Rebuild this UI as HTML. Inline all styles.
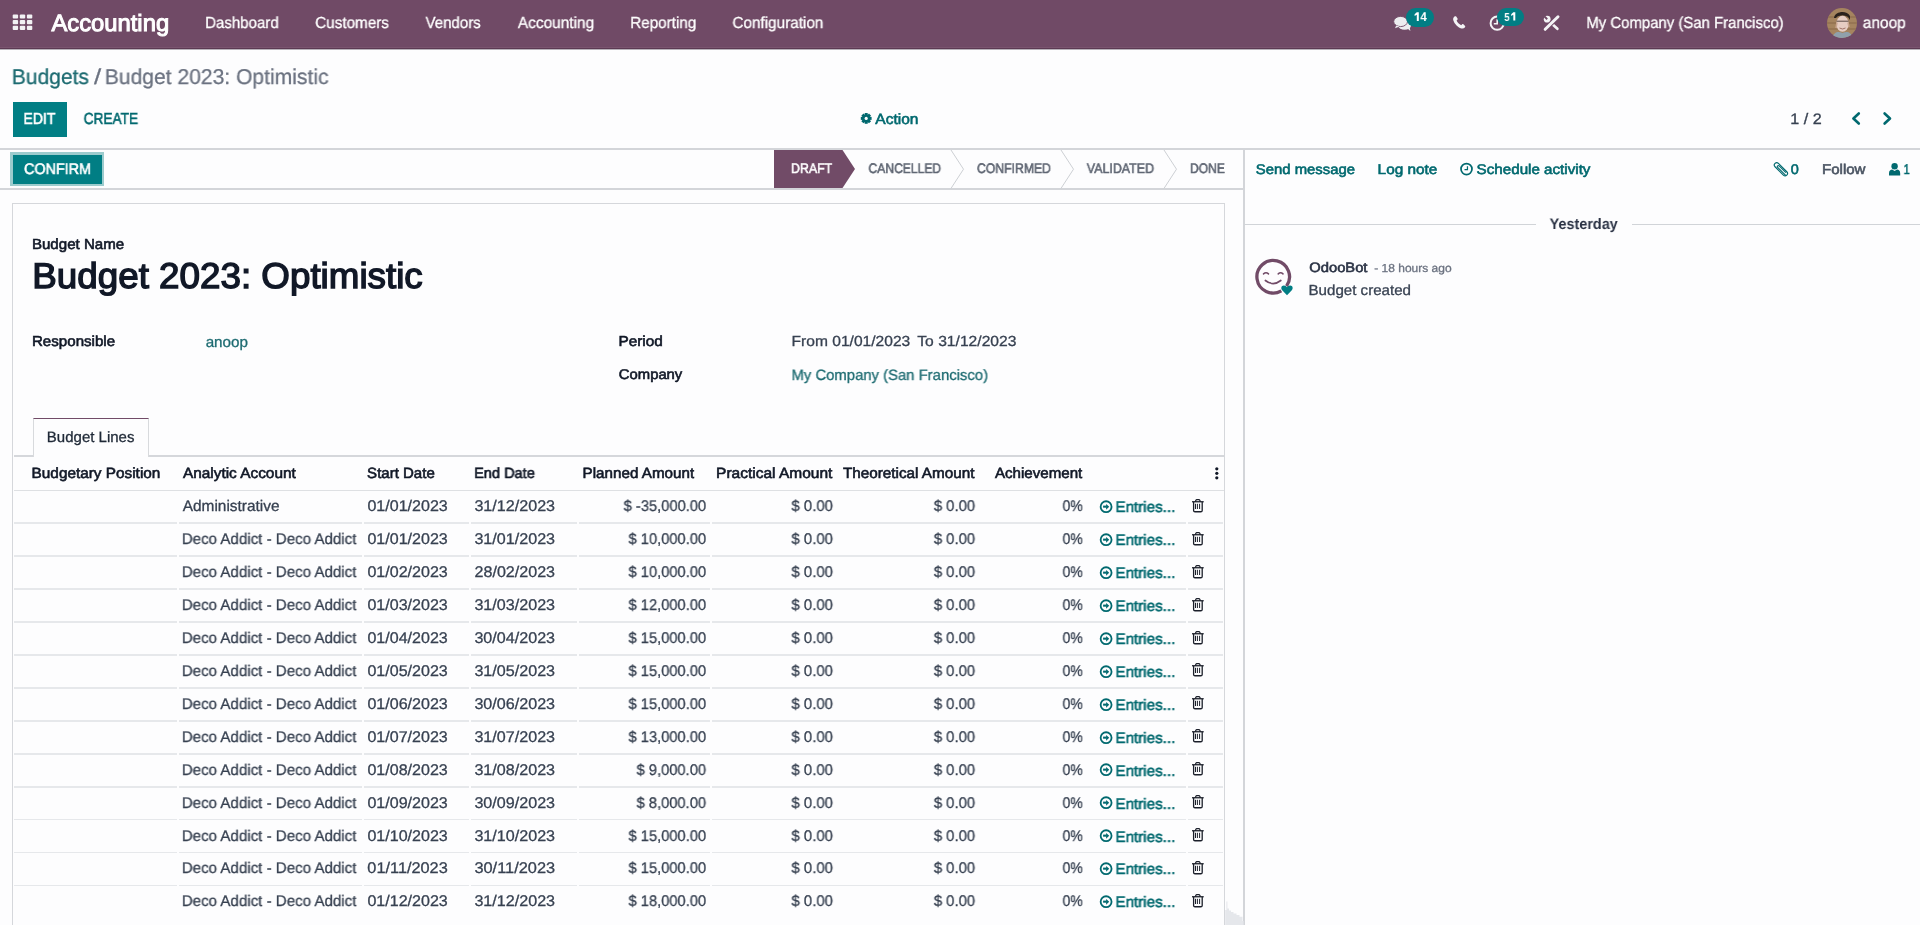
<!DOCTYPE html>
<html><head><meta charset="utf-8"><title>Budget 2023: Optimistic</title>
<style>
html,body{margin:0;padding:0;}
body{width:1920px;height:925px;overflow:hidden;position:relative;background:#FDFDFE;font-family:"Liberation Sans",sans-serif;}
.t{position:absolute;white-space:nowrap;line-height:1;transform-origin:0 0;text-rendering:geometricPrecision;will-change:transform;}
</style></head><body>
<div style="position:absolute;left:0px;top:0px;width:1920px;height:49px;background:#704A66;"></div>
<div style="position:absolute;left:0px;top:46.8px;width:1920px;height:1.1px;background:#7A546F;"></div>
<div style="position:absolute;left:0px;top:47.9px;width:1920px;height:1.1px;background:#5C3A53;"></div>
<div style="position:absolute;left:0px;top:49px;width:1920px;height:0.6px;background:#B8B2BA;"></div>
<svg style="position:absolute;left:0px;top:0px;overflow:visible" width="40" height="40" viewBox="0 0 40 40"><rect x="12.70" y="14.40" width="5.4" height="4.2" rx="1" fill="#F2F2F4"/><rect x="19.80" y="14.40" width="5.4" height="4.2" rx="1" fill="#F2F2F4"/><rect x="26.90" y="14.40" width="5.4" height="4.2" rx="1" fill="#F2F2F4"/><rect x="12.70" y="20.10" width="5.4" height="4.2" rx="1" fill="#F2F2F4"/><rect x="19.80" y="20.10" width="5.4" height="4.2" rx="1" fill="#F2F2F4"/><rect x="26.90" y="20.10" width="5.4" height="4.2" rx="1" fill="#F2F2F4"/><rect x="12.70" y="25.80" width="5.4" height="4.2" rx="1" fill="#F2F2F4"/><rect x="19.80" y="25.80" width="5.4" height="4.2" rx="1" fill="#F2F2F4"/><rect x="26.90" y="25.80" width="5.4" height="4.2" rx="1" fill="#F2F2F4"/></svg>
<div class="t" style="left:51px;top:13px;font-size:23.6px;color:#FFFFFF;transform:translateX(0.408px) scaleX(1.0084);-webkit-text-stroke:1.0px currentColor;">Accounting</div>
<div class="t" style="left:205px;top:16px;font-size:16.0px;color:#FFFFFF;transform:translateX(0.143px) scaleX(0.9390);-webkit-text-stroke:0.3px currentColor;">Dashboard</div>
<div class="t" style="left:315px;top:16px;font-size:16.0px;color:#FFFFFF;transform:translateX(0.184px) scaleX(0.9535);-webkit-text-stroke:0.3px currentColor;">Customers</div>
<div class="t" style="left:425px;top:16px;font-size:16.0px;color:#FFFFFF;transform:translateX(0.562px) scaleX(0.9389);-webkit-text-stroke:0.3px currentColor;">Vendors</div>
<div class="t" style="left:517px;top:16px;font-size:16.0px;color:#FFFFFF;transform:translateX(0.812px) scaleX(0.9651);-webkit-text-stroke:0.3px currentColor;">Accounting</div>
<div class="t" style="left:630px;top:16px;font-size:16.0px;color:#FFFFFF;transform:translateX(0.223px) scaleX(0.9523);-webkit-text-stroke:0.3px currentColor;">Reporting</div>
<div class="t" style="left:732px;top:16px;font-size:16.0px;color:#FFFFFF;transform:translateX(0.428px) scaleX(0.9551);-webkit-text-stroke:0.3px currentColor;">Configuration</div>
<svg style="position:absolute;left:1390px;top:12px;overflow:visible" width="24" height="22" viewBox="0 0 24 22"><ellipse cx="14.6" cy="13.4" rx="6.4" ry="4.4" fill="#ECECEF"/><path d="M17.4 16.6 L20.4 18.9 L19.6 14.8 Z" fill="#ECECEF"/><ellipse cx="10.6" cy="9.5" rx="6.9" ry="5.1" fill="#ECECEF" stroke="#714B67" stroke-width="0.9"/><path d="M6.2 13.4 L5 16.3 L9.6 14.4 Z" fill="#ECECEF"/></svg>
<div style="position:absolute;left:1406.2px;top:7.5px;width:28.2px;height:19.5px;background:#017E84;border-radius:10px;"></div>
<div class="t" style="left:1420px;top:11px;font-size:12.6px;color:#FFFFFF;transform:translateX(0.386px) scaleX(0.9071);font-weight:bold;">4</div>
<svg style="position:absolute;left:0px;top:0px;overflow:visible" width="1" height="1" viewBox="0 0 1 1"><path d="M1416.8 12.3 H1418.8 V21 H1416.8 V14.700000000000001 L1414.6 15.9 V14.200000000000001 Z" fill="#FFFFFF"/></svg>
<svg style="position:absolute;left:1453px;top:16px;overflow:visible" width="13" height="13" viewBox="0 0 13 13"><path d="M3.2 0.4 C2.6 0.2 1.8 0.3 1.2 0.8 C0.3 1.6 -0.1 2.8 0.3 4.2 C1.4 7.8 4.6 11.2 8.4 12.4 C9.8 12.8 11 12.4 11.8 11.6 C12.3 11.1 12.4 10.4 12.1 9.9 L10.6 8.4 C10.1 8 9.4 8 9 8.4 L8.2 9.2 C6.2 8.4 4.4 6.6 3.6 4.6 L4.4 3.8 C4.8 3.4 4.8 2.7 4.4 2.2 Z" fill="#F4F4F6"/></svg>
<svg style="position:absolute;left:1489px;top:15px;overflow:visible" width="17" height="17" viewBox="0 0 17 17"><circle cx="8.2" cy="8.2" r="6.6" fill="none" stroke="#F4F4F6" stroke-width="2"/><path d="M8.2 4.2 V8.8 H4.8" fill="none" stroke="#F4F4F6" stroke-width="1.6"/></svg>
<div style="position:absolute;left:1497.2px;top:7.7px;width:27px;height:18.3px;background:#017E84;border-radius:9.2px;"></div>
<div class="t" style="left:1504px;top:12px;font-size:11.6px;color:#FFFFFF;transform:translateX(0.340px) scaleX(0.8219);font-weight:bold;">5</div>
<svg style="position:absolute;left:0px;top:0px;overflow:visible" width="1" height="1" viewBox="0 0 1 1"><path d="M1513.3 12.3 H1515.3 V20.4 H1513.3 V14.700000000000001 L1511.2 15.9 V14.200000000000001 Z" fill="#FFFFFF"/></svg>
<svg style="position:absolute;left:1536px;top:8px;overflow:visible" width="30" height="30" viewBox="0 0 30 30"><path d="M15 15 L21.4 20.8" stroke="#F4F4F6" stroke-width="2.6" stroke-linecap="round"/><circle cx="11.2" cy="11.2" r="3.4" fill="#F4F4F6"/><path d="M11.9 10.5 L8.2 6.8 L6.8 8.2 L10.5 11.9 Z" fill="#714B67"/><path d="M9.2 21.3 L22 8.8" stroke="#714B67" stroke-width="4.8" stroke-linecap="round"/><path d="M9.2 21.3 L22 8.8" stroke="#F4F4F6" stroke-width="3" stroke-linecap="round"/></svg>
<div class="t" style="left:1586px;top:16px;font-size:16.0px;color:#FFFFFF;transform:translateX(0.373px) scaleX(0.9321);-webkit-text-stroke:0.3px currentColor;">My Company (San Francisco)</div>
<svg style="position:absolute;left:1827px;top:8px;overflow:visible" width="30" height="30" viewBox="0 0 30 30"><defs><clipPath id="av"><circle cx="15" cy="15" r="15"/></clipPath></defs><g clip-path="url(#av)"><rect width="30" height="30" fill="#a5845f"/><rect x="0" y="8" width="30" height="2" fill="#8d6d4c" opacity="0.6"/><rect x="0" y="14" width="30" height="2" fill="#8d6d4c" opacity="0.6"/><rect x="0" y="20" width="30" height="2" fill="#8d6d4c" opacity="0.6"/><path d="M7 10 C8 3 20 2 23 8 L23 12 L21 9 C17 7 11 7 9 10 Z" fill="#2a211c"/><ellipse cx="15.5" cy="15.8" rx="6.2" ry="8" fill="#e6cdc3"/><path d="M9.5 13.2 H21.5" stroke="#5a4a48" stroke-width="1"/><path d="M10 14.5 L9 20 M21 14.5 L22 19" stroke="#c9a58f" stroke-width="1.5"/><path d="M12.5 20 Q15.5 22 18.5 20" stroke="#9a6a60" stroke-width="0.9" fill="none"/><path d="M5 30 C7 24 11 23 15.5 25 C20 23 24 24 26 30 Z" fill="#8fa0ab"/></g></svg>
<div class="t" style="left:1862px;top:16px;font-size:16.0px;color:#FFFFFF;transform:translateX(0.746px) scaleX(0.9666);-webkit-text-stroke:0.3px currentColor;">anoop</div>
<div class="t" style="left:11px;top:67px;font-size:21.4px;color:#1D6B71;transform:translateX(0.794px) scaleX(0.9831);-webkit-text-stroke:0.3px currentColor;">Budgets</div>
<div class="t" style="left:93px;top:67px;font-size:21.4px;color:#6B7280;transform:translateX(0.877px) scaleX(1.2073);-webkit-text-stroke:0.3px currentColor;">/</div>
<div class="t" style="left:104px;top:67px;font-size:21.4px;color:#6B7280;transform:translateX(0.782px) scaleX(0.9850);-webkit-text-stroke:0.3px currentColor;">Budget 2023: Optimistic</div>
<div style="position:absolute;left:12.75px;top:101.9px;width:54.2px;height:34.9px;background:#017E84;"></div>
<div class="t" style="left:23px;top:112px;font-size:16.0px;color:#FFFFFF;transform:translateX(0.419px) scaleX(0.8759);-webkit-text-stroke:0.6px currentColor;">EDIT</div>
<div class="t" style="left:83px;top:112px;font-size:16.0px;color:#01696F;transform:translateX(0.670px) scaleX(0.8547);-webkit-text-stroke:0.6px currentColor;">CREATE</div>
<svg style="position:absolute;left:860.6px;top:113.2px;overflow:visible" width="11" height="11" viewBox="0 0 11 11"><g transform="translate(5.2,5.4)"><rect x="-1.5" y="-5.4" width="3" height="3" fill="#01696F" transform="rotate(0)"/><rect x="-1.5" y="-5.4" width="3" height="3" fill="#01696F" transform="rotate(45)"/><rect x="-1.5" y="-5.4" width="3" height="3" fill="#01696F" transform="rotate(90)"/><rect x="-1.5" y="-5.4" width="3" height="3" fill="#01696F" transform="rotate(135)"/><rect x="-1.5" y="-5.4" width="3" height="3" fill="#01696F" transform="rotate(180)"/><rect x="-1.5" y="-5.4" width="3" height="3" fill="#01696F" transform="rotate(225)"/><rect x="-1.5" y="-5.4" width="3" height="3" fill="#01696F" transform="rotate(270)"/><rect x="-1.5" y="-5.4" width="3" height="3" fill="#01696F" transform="rotate(315)"/><circle r="4" fill="#01696F"/><circle r="1.6" fill="#FDFDFE"/></g></svg>
<div class="t" style="left:875px;top:113px;font-size:14.8px;color:#01696F;transform:translateX(0.329px) scaleX(1.0464);-webkit-text-stroke:0.6px currentColor;">Action</div>
<div class="t" style="left:1790px;top:112px;font-size:15.2px;color:#374151;transform:translateX(0.279px) scaleX(1.0648);-webkit-text-stroke:0.3px currentColor;">1 / 2</div>
<svg style="position:absolute;left:1851px;top:112px;overflow:visible" width="10" height="13" viewBox="0 0 10 13"><path d="M7.8 1.5 L2.4 6.5 L7.8 11.5" fill="none" stroke="#01696F" stroke-width="2.6" stroke-linecap="round" stroke-linejoin="round"/></svg>
<svg style="position:absolute;left:1883px;top:112px;overflow:visible" width="10" height="13" viewBox="0 0 10 13"><path d="M1.6 1.5 L7 6.5 L1.6 11.5" fill="none" stroke="#01696F" stroke-width="2.6" stroke-linecap="round" stroke-linejoin="round"/></svg>
<div style="position:absolute;left:0px;top:148.2px;width:1920px;height:1.9px;background:#D3D5D9;"></div>
<div style="position:absolute;left:10.3px;top:152px;width:93.8px;height:34px;background:#9ccbcd;"></div>
<div style="position:absolute;left:12.75px;top:154.5px;width:89.65px;height:29.4px;background:#017E84;"></div>
<div class="t" style="left:24px;top:162px;font-size:15.2px;color:#FFFFFF;transform:translateX(0.055px) scaleX(0.9442);-webkit-text-stroke:0.6px currentColor;">CONFIRM</div>
<div style="position:absolute;left:0px;top:188.1px;width:1243px;height:1.9px;background:#D3D5D9;"></div>
<svg style="position:absolute;left:774px;top:150.3px;overflow:visible" width="82" height="38" viewBox="0 0 82 38"><path d="M0 0 H68.5 L81 19 L68.5 38 H0 Z" fill="#714B67"/></svg>
<div class="t" style="left:790px;top:162px;font-size:13.8px;color:#FFFFFF;transform:translateX(0.991px) scaleX(0.8960);-webkit-text-stroke:0.6px currentColor;">DRAFT</div>
<div class="t" style="left:868px;top:162px;font-size:13.8px;color:#5F6673;transform:translateX(0.452px) scaleX(0.8770);-webkit-text-stroke:0.6px currentColor;">CANCELLED</div>
<div class="t" style="left:976px;top:162px;font-size:13.8px;color:#5F6673;transform:translateX(0.920px) scaleX(0.8855);-webkit-text-stroke:0.6px currentColor;">CONFIRMED</div>
<div class="t" style="left:1086px;top:162px;font-size:13.8px;color:#5F6673;transform:translateX(0.775px) scaleX(0.9013);-webkit-text-stroke:0.6px currentColor;">VALIDATED</div>
<div class="t" style="left:1189px;top:162px;font-size:13.8px;color:#5F6673;transform:translateX(0.994px) scaleX(0.8735);-webkit-text-stroke:0.6px currentColor;">DONE</div>
<svg style="position:absolute;left:951.25px;top:150px;overflow:visible" width="14" height="39" viewBox="0 0 14 39"><path d="M0 0 L12.5 19.2 L0 38.4" fill="none" stroke="#CDD0D4" stroke-width="1"/></svg>
<svg style="position:absolute;left:1061.25px;top:150px;overflow:visible" width="14" height="39" viewBox="0 0 14 39"><path d="M0 0 L12.5 19.2 L0 38.4" fill="none" stroke="#CDD0D4" stroke-width="1"/></svg>
<svg style="position:absolute;left:1164.4px;top:150px;overflow:visible" width="14" height="39" viewBox="0 0 14 39"><path d="M0 0 L12.5 19.2 L0 38.4" fill="none" stroke="#CDD0D4" stroke-width="1"/></svg>
<div style="position:absolute;left:1242.8px;top:150px;width:1.9px;height:775px;background:#D3D5D9;"></div>
<div class="t" style="left:1255px;top:162px;font-size:14.0px;color:#01696F;transform:translateX(0.798px) scaleX(1.0625);-webkit-text-stroke:0.6px currentColor;">Send message</div>
<div class="t" style="left:1377px;top:162px;font-size:14.0px;color:#01696F;transform:translateX(0.580px) scaleX(1.0979);-webkit-text-stroke:0.6px currentColor;">Log note</div>
<svg style="position:absolute;left:1455px;top:158px;overflow:visible" width="25" height="24" viewBox="0 0 25 24"><circle cx="11.5" cy="11.1" r="5.5" fill="none" stroke="#01696F" stroke-width="1.7"/><path d="M12.45 8.2 V11.5 H9.5" fill="none" stroke="#01696F" stroke-width="1.25"/></svg>
<div class="t" style="left:1476px;top:162px;font-size:14.0px;color:#01696F;transform:translateX(0.616px) scaleX(1.0836);-webkit-text-stroke:0.6px currentColor;">Schedule activity</div>
<svg style="position:absolute;left:1770px;top:158px;overflow:visible" width="30" height="24" viewBox="0 0 30 24"><g transform="translate(10.9 11.25) rotate(-45)"><rect x="-2.4" y="-8.3" width="4.8" height="16.6" rx="2.4" fill="none" stroke="#01696F" stroke-width="1.15"/><path d="M-1 8.1 V-3.6 A1.05 1.05 0 0 1 1.1 -3.6 V6" fill="none" stroke="#01696F" stroke-width="1.1"/></g></svg>
<div class="t" style="left:1790px;top:162px;font-size:14.0px;color:#01696F;transform:translateX(0.676px) scaleX(1.0333);-webkit-text-stroke:0.6px currentColor;">0</div>
<div class="t" style="left:1821px;top:162px;font-size:14.0px;color:#4B5563;transform:translateX(0.965px) scaleX(1.0754);-webkit-text-stroke:0.6px currentColor;">Follow</div>
<svg style="position:absolute;left:1889px;top:162.8px;overflow:visible" width="11.5" height="13" viewBox="0 0 11.5 13"><circle cx="5.6" cy="3.3" r="3.2" fill="#01696F"/><path d="M0 12.6 V10.2 C0 8 1.6 6.6 3.2 6.6 L5.6 8 L8 6.6 C9.8 6.6 11.2 8 11.2 10.2 V12.6 Z" fill="#01696F"/></svg>
<div class="t" style="left:1903px;top:162px;font-size:14.0px;color:#01696F;transform:translateX(0.568px) scaleX(0.8033);-webkit-text-stroke:0.6px currentColor;">1</div>
<div style="position:absolute;left:1244px;top:224px;width:291.7px;height:1.2px;background:#D1D4D8;"></div>
<div style="position:absolute;left:1631.6px;top:224px;width:288.4px;height:1.2px;background:#D1D4D8;"></div>
<div class="t" style="left:1549px;top:217px;font-size:15.2px;color:#2B3345;transform:translateX(0.598px) scaleX(0.9497);font-weight:bold;">Yesterday</div>
<svg style="position:absolute;left:1250px;top:253px;overflow:visible" width="50" height="47" viewBox="0 0 50 47"><path d="M36.55 33.15 A16.3 16.3 0 1 0 31.35 37.9" fill="none" stroke="#714B67" stroke-width="3.3"/><path d="M13.5 20.9 Q16 18.5 18.5 20.9" fill="none" stroke="#714B67" stroke-width="1.5" stroke-linecap="round"/><path d="M28.2 20.9 Q30.6 18.5 33 20.9" fill="none" stroke="#714B67" stroke-width="1.5" stroke-linecap="round"/><path d="M15.4 27.5 Q23.1 33.6 30.8 27.5" fill="none" stroke="#714B67" stroke-width="1.7" stroke-linecap="round"/><path d="M37 42.2 L32.2 37.2 C30.6 35.6 31.2 32.6 33.8 32.5 C35.2 32.4 36.2 33.2 37 34.2 C37.8 33.2 38.8 32.4 40.2 32.5 C42.8 32.6 43.4 35.6 41.8 37.2 Z" fill="#017E84"/></svg>
<div class="t" style="left:1309px;top:261px;font-size:13.6px;color:#2B3345;transform:translateX(0.290px) scaleX(1.0835);-webkit-text-stroke:0.6px currentColor;">OdooBot</div>
<div class="t" style="left:1374px;top:263px;font-size:11.6px;color:#6B7280;transform:translateX(0.216px) scaleX(1.0348);-webkit-text-stroke:0.3px currentColor;">- 18 hours ago</div>
<div class="t" style="left:1308px;top:284px;font-size:14.6px;color:#374151;transform:translateX(0.544px) scaleX(1.0349);-webkit-text-stroke:0.3px currentColor;">Budget created</div>
<div style="position:absolute;left:12.3px;top:203.1px;width:1213px;height:800px;border:1.8px solid #D5D7DB;box-sizing:border-box;background:#FDFDFE;"></div>
<div class="t" style="left:31px;top:238px;font-size:14.6px;color:#111827;transform:translateX(0.924px) scaleX(1.0336);-webkit-text-stroke:0.6px currentColor;">Budget Name</div>
<div class="t" style="left:32px;top:259px;font-size:35.8px;color:#111827;transform:translateX(0.341px) scaleX(1.0272);-webkit-text-stroke:1.4px currentColor;">Budget 2023: Optimistic</div>
<div class="t" style="left:31px;top:335px;font-size:14.4px;color:#111827;transform:translateX(0.949px) scaleX(1.0500);-webkit-text-stroke:0.6px currentColor;">Responsible</div>
<div class="t" style="left:205px;top:335px;font-size:15.0px;color:#1D6B71;transform:translateX(0.653px) scaleX(1.0147);-webkit-text-stroke:0.3px currentColor;">anoop</div>
<div class="t" style="left:618px;top:335px;font-size:14.4px;color:#111827;transform:translateX(0.423px) scaleX(1.0668);-webkit-text-stroke:0.6px currentColor;">Period</div>
<div class="t" style="left:791px;top:335px;font-size:14.6px;color:#374151;transform:translateX(0.511px) scaleX(1.0684);-webkit-text-stroke:0.3px currentColor;">From 01/01/2023</div>
<div class="t" style="left:917px;top:335px;font-size:14.6px;color:#374151;transform:translateX(0.286px) scaleX(1.0719);-webkit-text-stroke:0.3px currentColor;">To 31/12/2023</div>
<div class="t" style="left:618px;top:367px;font-size:14.0px;color:#111827;transform:translateX(0.845px) scaleX(1.0586);-webkit-text-stroke:0.6px currentColor;">Company</div>
<div class="t" style="left:791px;top:368px;font-size:15.0px;color:#1D6B71;transform:translateX(0.475px) scaleX(0.9905);-webkit-text-stroke:0.3px currentColor;">My Company (San Francisco)</div>
<div style="position:absolute;left:13.6px;top:455px;width:1210px;height:1.8px;background:#D5D7DB;"></div>
<div style="position:absolute;left:32.7px;top:418px;width:116.1px;height:38.7px;border:1.2px solid #D8DADD;border-bottom:none;border-top:1.2px solid #714B67;box-sizing:border-box;background:#FDFDFE;"></div>
<div class="t" style="left:46px;top:430px;font-size:15.0px;color:#1F2937;transform:translateX(0.868px) scaleX(1.0001);-webkit-text-stroke:0.3px currentColor;">Budget Lines</div>
<div class="t" style="left:31px;top:467px;font-size:14.8px;color:#111827;transform:translateX(0.603px) scaleX(1.0365);-webkit-text-stroke:0.6px currentColor;">Budgetary Position</div>
<div class="t" style="left:182px;top:467px;font-size:14.8px;color:#111827;transform:translateX(0.894px) scaleX(1.0400);-webkit-text-stroke:0.6px currentColor;">Analytic Account</div>
<div class="t" style="left:367px;top:467px;font-size:14.8px;color:#111827;transform:translateX(0.119px) scaleX(1.0153);-webkit-text-stroke:0.6px currentColor;">Start Date</div>
<div class="t" style="left:474px;top:467px;font-size:14.8px;color:#111827;transform:translateX(0.122px) scaleX(0.9851);-webkit-text-stroke:0.6px currentColor;">End Date</div>
<div class="t" style="left:582px;top:467px;font-size:14.8px;color:#111827;transform:translateX(0.609px) scaleX(1.0267);-webkit-text-stroke:0.6px currentColor;">Planned Amount</div>
<div class="t" style="left:716px;top:467px;font-size:14.8px;color:#111827;transform:translateX(0.116px) scaleX(1.0474);-webkit-text-stroke:0.6px currentColor;">Practical Amount</div>
<div class="t" style="left:842px;top:467px;font-size:14.8px;color:#111827;transform:translateX(0.932px) scaleX(1.0315);-webkit-text-stroke:0.6px currentColor;">Theoretical Amount</div>
<div class="t" style="left:994px;top:467px;font-size:14.8px;color:#111827;transform:translateX(0.946px) scaleX(1.0206);-webkit-text-stroke:0.6px currentColor;">Achievement</div>
<svg style="position:absolute;left:1215px;top:467px;overflow:visible" width="4" height="13" viewBox="0 0 4 13"><circle cx="1.8" cy="1.8" r="1.6" fill="#111827"/><circle cx="1.8" cy="6.3" r="1.6" fill="#111827"/><circle cx="1.8" cy="10.8" r="1.6" fill="#111827"/></svg>
<div style="position:absolute;left:13.6px;top:489.6px;width:1210px;height:1.7px;background:#DEE0E3;"></div>
<div class="t" style="left:182px;top:499px;font-size:15.4px;color:#374151;transform:translateX(0.743px) scaleX(1.0018);-webkit-text-stroke:0.3px currentColor;">Administrative</div>
<div class="t" style="left:367px;top:499px;font-size:15.4px;color:#374151;transform:translateX(0.395px) scaleX(1.0431);-webkit-text-stroke:0.3px currentColor;">01/01/2023</div>
<div class="t" style="left:474px;top:499px;font-size:15.4px;color:#374151;transform:translateX(0.401px) scaleX(1.0470);-webkit-text-stroke:0.3px currentColor;">31/12/2023</div>
<div class="t" style="left:623px;top:499px;font-size:15.4px;color:#374151;transform:translateX(0.654px) scaleX(0.9552);-webkit-text-stroke:0.3px currentColor;">$ -35,000.00</div>
<div class="t" style="left:791px;top:499px;font-size:15.4px;color:#374151;transform:translateX(0.447px) scaleX(0.9687);-webkit-text-stroke:0.3px currentColor;">$ 0.00</div>
<div class="t" style="left:933px;top:499px;font-size:15.4px;color:#374151;transform:translateX(0.861px) scaleX(0.9629);-webkit-text-stroke:0.3px currentColor;">$ 0.00</div>
<div class="t" style="left:1062px;top:499px;font-size:15.4px;color:#374151;transform:translateX(0.569px) scaleX(0.9052);-webkit-text-stroke:0.3px currentColor;">0%</div>
<svg style="position:absolute;left:1094px;top:493.95px;overflow:visible" width="30" height="26" viewBox="0 0 30 26"><circle cx="12.1" cy="12.7" r="5.45" fill="none" stroke="#01696F" stroke-width="1.8"/><path d="M9.1 12.65 H12.6" stroke="#01696F" stroke-width="2.1"/><path d="M12.1 10.1 L15.2 12.65 L12.1 15.7 Z" fill="#01696F"/></svg>
<div class="t" style="left:1115px;top:500px;font-size:15.2px;color:#01696F;transform:translateX(0.404px) scaleX(0.9996);-webkit-text-stroke:0.6px currentColor;">Entries...</div>
<svg style="position:absolute;left:1192px;top:498.75px;overflow:visible" width="12" height="14" viewBox="0 0 12 14"><path d="M0 2.75 H11.7" stroke="#1b1f2a" stroke-width="1.3"/><path d="M3.3 2.8 L3.9 1.2 C4.1 0.8 4.4 0.6 4.8 0.6 H6.9 C7.3 0.6 7.6 0.8 7.8 1.2 L8.4 2.8" fill="none" stroke="#1b1f2a" stroke-width="1.2"/><path d="M1.6 3 V11.4 C1.6 12.2 2.2 12.75 3 12.75 H8.8 C9.6 12.75 10.2 12.2 10.2 11.4 V3" fill="none" stroke="#1b1f2a" stroke-width="1.3"/><path d="M3.5 4.8 V10 M5.4 4.8 V10 M7.6 4.8 V10" stroke="#1b1f2a" stroke-width="1"/></svg>
<div style="position:absolute;left:13.8px;top:522.2px;width:163.2px;height:1.8px;background:#E6E8EB;"></div>
<div style="position:absolute;left:179px;top:522.2px;width:183px;height:1.8px;background:#E6E8EB;"></div>
<div style="position:absolute;left:364px;top:522.2px;width:105px;height:1.8px;background:#E6E8EB;"></div>
<div style="position:absolute;left:471px;top:522.2px;width:106px;height:1.8px;background:#E6E8EB;"></div>
<div style="position:absolute;left:579px;top:522.2px;width:131px;height:1.8px;background:#E6E8EB;"></div>
<div style="position:absolute;left:712px;top:522.2px;width:474px;height:1.8px;background:#E6E8EB;"></div>
<div style="position:absolute;left:1188px;top:522.2px;width:35px;height:1.8px;background:#E6E8EB;"></div>
<div class="t" style="left:181px;top:532px;font-size:15.4px;color:#374151;transform:translateX(0.836px) scaleX(0.9807);-webkit-text-stroke:0.3px currentColor;">Deco Addict - Deco Addict</div>
<div class="t" style="left:367px;top:532px;font-size:15.4px;color:#374151;transform:translateX(0.395px) scaleX(1.0431);-webkit-text-stroke:0.3px currentColor;">01/01/2023</div>
<div class="t" style="left:474px;top:532px;font-size:15.4px;color:#374151;transform:translateX(0.401px) scaleX(1.0470);-webkit-text-stroke:0.3px currentColor;">31/01/2023</div>
<div class="t" style="left:628px;top:532px;font-size:15.4px;color:#374151;transform:translateX(0.516px) scaleX(0.9543);-webkit-text-stroke:0.3px currentColor;">$ 10,000.00</div>
<div class="t" style="left:791px;top:532px;font-size:15.4px;color:#374151;transform:translateX(0.447px) scaleX(0.9687);-webkit-text-stroke:0.3px currentColor;">$ 0.00</div>
<div class="t" style="left:933px;top:532px;font-size:15.4px;color:#374151;transform:translateX(0.861px) scaleX(0.9629);-webkit-text-stroke:0.3px currentColor;">$ 0.00</div>
<div class="t" style="left:1062px;top:532px;font-size:15.4px;color:#374151;transform:translateX(0.569px) scaleX(0.9052);-webkit-text-stroke:0.3px currentColor;">0%</div>
<svg style="position:absolute;left:1094px;top:526.89px;overflow:visible" width="30" height="26" viewBox="0 0 30 26"><circle cx="12.1" cy="12.7" r="5.45" fill="none" stroke="#01696F" stroke-width="1.8"/><path d="M9.1 12.65 H12.6" stroke="#01696F" stroke-width="2.1"/><path d="M12.1 10.1 L15.2 12.65 L12.1 15.7 Z" fill="#01696F"/></svg>
<div class="t" style="left:1115px;top:533px;font-size:15.2px;color:#01696F;transform:translateX(0.404px) scaleX(0.9996);-webkit-text-stroke:0.6px currentColor;">Entries...</div>
<svg style="position:absolute;left:1192px;top:531.6899999999999px;overflow:visible" width="12" height="14" viewBox="0 0 12 14"><path d="M0 2.75 H11.7" stroke="#1b1f2a" stroke-width="1.3"/><path d="M3.3 2.8 L3.9 1.2 C4.1 0.8 4.4 0.6 4.8 0.6 H6.9 C7.3 0.6 7.6 0.8 7.8 1.2 L8.4 2.8" fill="none" stroke="#1b1f2a" stroke-width="1.2"/><path d="M1.6 3 V11.4 C1.6 12.2 2.2 12.75 3 12.75 H8.8 C9.6 12.75 10.2 12.2 10.2 11.4 V3" fill="none" stroke="#1b1f2a" stroke-width="1.3"/><path d="M3.5 4.8 V10 M5.4 4.8 V10 M7.6 4.8 V10" stroke="#1b1f2a" stroke-width="1"/></svg>
<div style="position:absolute;left:13.8px;top:555.14px;width:163.2px;height:1.8px;background:#E6E8EB;"></div>
<div style="position:absolute;left:179px;top:555.14px;width:183px;height:1.8px;background:#E6E8EB;"></div>
<div style="position:absolute;left:364px;top:555.14px;width:105px;height:1.8px;background:#E6E8EB;"></div>
<div style="position:absolute;left:471px;top:555.14px;width:106px;height:1.8px;background:#E6E8EB;"></div>
<div style="position:absolute;left:579px;top:555.14px;width:131px;height:1.8px;background:#E6E8EB;"></div>
<div style="position:absolute;left:712px;top:555.14px;width:474px;height:1.8px;background:#E6E8EB;"></div>
<div style="position:absolute;left:1188px;top:555.14px;width:35px;height:1.8px;background:#E6E8EB;"></div>
<div class="t" style="left:181px;top:565px;font-size:15.4px;color:#374151;transform:translateX(0.836px) scaleX(0.9807);-webkit-text-stroke:0.3px currentColor;">Deco Addict - Deco Addict</div>
<div class="t" style="left:367px;top:565px;font-size:15.4px;color:#374151;transform:translateX(0.395px) scaleX(1.0431);-webkit-text-stroke:0.3px currentColor;">01/02/2023</div>
<div class="t" style="left:474px;top:565px;font-size:15.4px;color:#374151;transform:translateX(0.554px) scaleX(1.0453);-webkit-text-stroke:0.3px currentColor;">28/02/2023</div>
<div class="t" style="left:628px;top:565px;font-size:15.4px;color:#374151;transform:translateX(0.516px) scaleX(0.9543);-webkit-text-stroke:0.3px currentColor;">$ 10,000.00</div>
<div class="t" style="left:791px;top:565px;font-size:15.4px;color:#374151;transform:translateX(0.447px) scaleX(0.9687);-webkit-text-stroke:0.3px currentColor;">$ 0.00</div>
<div class="t" style="left:933px;top:565px;font-size:15.4px;color:#374151;transform:translateX(0.861px) scaleX(0.9629);-webkit-text-stroke:0.3px currentColor;">$ 0.00</div>
<div class="t" style="left:1062px;top:565px;font-size:15.4px;color:#374151;transform:translateX(0.569px) scaleX(0.9052);-webkit-text-stroke:0.3px currentColor;">0%</div>
<svg style="position:absolute;left:1094px;top:559.8299999999999px;overflow:visible" width="30" height="26" viewBox="0 0 30 26"><circle cx="12.1" cy="12.7" r="5.45" fill="none" stroke="#01696F" stroke-width="1.8"/><path d="M9.1 12.65 H12.6" stroke="#01696F" stroke-width="2.1"/><path d="M12.1 10.1 L15.2 12.65 L12.1 15.7 Z" fill="#01696F"/></svg>
<div class="t" style="left:1115px;top:566px;font-size:15.2px;color:#01696F;transform:translateX(0.404px) scaleX(0.9996);-webkit-text-stroke:0.6px currentColor;">Entries...</div>
<svg style="position:absolute;left:1192px;top:564.6299999999999px;overflow:visible" width="12" height="14" viewBox="0 0 12 14"><path d="M0 2.75 H11.7" stroke="#1b1f2a" stroke-width="1.3"/><path d="M3.3 2.8 L3.9 1.2 C4.1 0.8 4.4 0.6 4.8 0.6 H6.9 C7.3 0.6 7.6 0.8 7.8 1.2 L8.4 2.8" fill="none" stroke="#1b1f2a" stroke-width="1.2"/><path d="M1.6 3 V11.4 C1.6 12.2 2.2 12.75 3 12.75 H8.8 C9.6 12.75 10.2 12.2 10.2 11.4 V3" fill="none" stroke="#1b1f2a" stroke-width="1.3"/><path d="M3.5 4.8 V10 M5.4 4.8 V10 M7.6 4.8 V10" stroke="#1b1f2a" stroke-width="1"/></svg>
<div style="position:absolute;left:13.8px;top:588.08px;width:163.2px;height:1.8px;background:#E6E8EB;"></div>
<div style="position:absolute;left:179px;top:588.08px;width:183px;height:1.8px;background:#E6E8EB;"></div>
<div style="position:absolute;left:364px;top:588.08px;width:105px;height:1.8px;background:#E6E8EB;"></div>
<div style="position:absolute;left:471px;top:588.08px;width:106px;height:1.8px;background:#E6E8EB;"></div>
<div style="position:absolute;left:579px;top:588.08px;width:131px;height:1.8px;background:#E6E8EB;"></div>
<div style="position:absolute;left:712px;top:588.08px;width:474px;height:1.8px;background:#E6E8EB;"></div>
<div style="position:absolute;left:1188px;top:588.08px;width:35px;height:1.8px;background:#E6E8EB;"></div>
<div class="t" style="left:181px;top:598px;font-size:15.4px;color:#374151;transform:translateX(0.836px) scaleX(0.9807);-webkit-text-stroke:0.3px currentColor;">Deco Addict - Deco Addict</div>
<div class="t" style="left:367px;top:598px;font-size:15.4px;color:#374151;transform:translateX(0.395px) scaleX(1.0431);-webkit-text-stroke:0.3px currentColor;">01/03/2023</div>
<div class="t" style="left:474px;top:598px;font-size:15.4px;color:#374151;transform:translateX(0.401px) scaleX(1.0470);-webkit-text-stroke:0.3px currentColor;">31/03/2023</div>
<div class="t" style="left:628px;top:598px;font-size:15.4px;color:#374151;transform:translateX(0.516px) scaleX(0.9543);-webkit-text-stroke:0.3px currentColor;">$ 12,000.00</div>
<div class="t" style="left:791px;top:598px;font-size:15.4px;color:#374151;transform:translateX(0.447px) scaleX(0.9687);-webkit-text-stroke:0.3px currentColor;">$ 0.00</div>
<div class="t" style="left:933px;top:598px;font-size:15.4px;color:#374151;transform:translateX(0.861px) scaleX(0.9629);-webkit-text-stroke:0.3px currentColor;">$ 0.00</div>
<div class="t" style="left:1062px;top:598px;font-size:15.4px;color:#374151;transform:translateX(0.569px) scaleX(0.9052);-webkit-text-stroke:0.3px currentColor;">0%</div>
<svg style="position:absolute;left:1094px;top:592.77px;overflow:visible" width="30" height="26" viewBox="0 0 30 26"><circle cx="12.1" cy="12.7" r="5.45" fill="none" stroke="#01696F" stroke-width="1.8"/><path d="M9.1 12.65 H12.6" stroke="#01696F" stroke-width="2.1"/><path d="M12.1 10.1 L15.2 12.65 L12.1 15.7 Z" fill="#01696F"/></svg>
<div class="t" style="left:1115px;top:599px;font-size:15.2px;color:#01696F;transform:translateX(0.404px) scaleX(0.9996);-webkit-text-stroke:0.6px currentColor;">Entries...</div>
<svg style="position:absolute;left:1192px;top:597.5699999999999px;overflow:visible" width="12" height="14" viewBox="0 0 12 14"><path d="M0 2.75 H11.7" stroke="#1b1f2a" stroke-width="1.3"/><path d="M3.3 2.8 L3.9 1.2 C4.1 0.8 4.4 0.6 4.8 0.6 H6.9 C7.3 0.6 7.6 0.8 7.8 1.2 L8.4 2.8" fill="none" stroke="#1b1f2a" stroke-width="1.2"/><path d="M1.6 3 V11.4 C1.6 12.2 2.2 12.75 3 12.75 H8.8 C9.6 12.75 10.2 12.2 10.2 11.4 V3" fill="none" stroke="#1b1f2a" stroke-width="1.3"/><path d="M3.5 4.8 V10 M5.4 4.8 V10 M7.6 4.8 V10" stroke="#1b1f2a" stroke-width="1"/></svg>
<div style="position:absolute;left:13.8px;top:621.02px;width:163.2px;height:1.8px;background:#E6E8EB;"></div>
<div style="position:absolute;left:179px;top:621.02px;width:183px;height:1.8px;background:#E6E8EB;"></div>
<div style="position:absolute;left:364px;top:621.02px;width:105px;height:1.8px;background:#E6E8EB;"></div>
<div style="position:absolute;left:471px;top:621.02px;width:106px;height:1.8px;background:#E6E8EB;"></div>
<div style="position:absolute;left:579px;top:621.02px;width:131px;height:1.8px;background:#E6E8EB;"></div>
<div style="position:absolute;left:712px;top:621.02px;width:474px;height:1.8px;background:#E6E8EB;"></div>
<div style="position:absolute;left:1188px;top:621.02px;width:35px;height:1.8px;background:#E6E8EB;"></div>
<div class="t" style="left:181px;top:631px;font-size:15.4px;color:#374151;transform:translateX(0.836px) scaleX(0.9807);-webkit-text-stroke:0.3px currentColor;">Deco Addict - Deco Addict</div>
<div class="t" style="left:367px;top:631px;font-size:15.4px;color:#374151;transform:translateX(0.395px) scaleX(1.0431);-webkit-text-stroke:0.3px currentColor;">01/04/2023</div>
<div class="t" style="left:474px;top:631px;font-size:15.4px;color:#374151;transform:translateX(0.401px) scaleX(1.0470);-webkit-text-stroke:0.3px currentColor;">30/04/2023</div>
<div class="t" style="left:628px;top:631px;font-size:15.4px;color:#374151;transform:translateX(0.516px) scaleX(0.9543);-webkit-text-stroke:0.3px currentColor;">$ 15,000.00</div>
<div class="t" style="left:791px;top:631px;font-size:15.4px;color:#374151;transform:translateX(0.447px) scaleX(0.9687);-webkit-text-stroke:0.3px currentColor;">$ 0.00</div>
<div class="t" style="left:933px;top:631px;font-size:15.4px;color:#374151;transform:translateX(0.861px) scaleX(0.9629);-webkit-text-stroke:0.3px currentColor;">$ 0.00</div>
<div class="t" style="left:1062px;top:631px;font-size:15.4px;color:#374151;transform:translateX(0.569px) scaleX(0.9052);-webkit-text-stroke:0.3px currentColor;">0%</div>
<svg style="position:absolute;left:1094px;top:625.71px;overflow:visible" width="30" height="26" viewBox="0 0 30 26"><circle cx="12.1" cy="12.7" r="5.45" fill="none" stroke="#01696F" stroke-width="1.8"/><path d="M9.1 12.65 H12.6" stroke="#01696F" stroke-width="2.1"/><path d="M12.1 10.1 L15.2 12.65 L12.1 15.7 Z" fill="#01696F"/></svg>
<div class="t" style="left:1115px;top:632px;font-size:15.2px;color:#01696F;transform:translateX(0.404px) scaleX(0.9996);-webkit-text-stroke:0.6px currentColor;">Entries...</div>
<svg style="position:absolute;left:1192px;top:630.51px;overflow:visible" width="12" height="14" viewBox="0 0 12 14"><path d="M0 2.75 H11.7" stroke="#1b1f2a" stroke-width="1.3"/><path d="M3.3 2.8 L3.9 1.2 C4.1 0.8 4.4 0.6 4.8 0.6 H6.9 C7.3 0.6 7.6 0.8 7.8 1.2 L8.4 2.8" fill="none" stroke="#1b1f2a" stroke-width="1.2"/><path d="M1.6 3 V11.4 C1.6 12.2 2.2 12.75 3 12.75 H8.8 C9.6 12.75 10.2 12.2 10.2 11.4 V3" fill="none" stroke="#1b1f2a" stroke-width="1.3"/><path d="M3.5 4.8 V10 M5.4 4.8 V10 M7.6 4.8 V10" stroke="#1b1f2a" stroke-width="1"/></svg>
<div style="position:absolute;left:13.8px;top:653.96px;width:163.2px;height:1.8px;background:#E6E8EB;"></div>
<div style="position:absolute;left:179px;top:653.96px;width:183px;height:1.8px;background:#E6E8EB;"></div>
<div style="position:absolute;left:364px;top:653.96px;width:105px;height:1.8px;background:#E6E8EB;"></div>
<div style="position:absolute;left:471px;top:653.96px;width:106px;height:1.8px;background:#E6E8EB;"></div>
<div style="position:absolute;left:579px;top:653.96px;width:131px;height:1.8px;background:#E6E8EB;"></div>
<div style="position:absolute;left:712px;top:653.96px;width:474px;height:1.8px;background:#E6E8EB;"></div>
<div style="position:absolute;left:1188px;top:653.96px;width:35px;height:1.8px;background:#E6E8EB;"></div>
<div class="t" style="left:181px;top:664px;font-size:15.4px;color:#374151;transform:translateX(0.836px) scaleX(0.9807);-webkit-text-stroke:0.3px currentColor;">Deco Addict - Deco Addict</div>
<div class="t" style="left:367px;top:664px;font-size:15.4px;color:#374151;transform:translateX(0.395px) scaleX(1.0431);-webkit-text-stroke:0.3px currentColor;">01/05/2023</div>
<div class="t" style="left:474px;top:664px;font-size:15.4px;color:#374151;transform:translateX(0.401px) scaleX(1.0470);-webkit-text-stroke:0.3px currentColor;">31/05/2023</div>
<div class="t" style="left:628px;top:664px;font-size:15.4px;color:#374151;transform:translateX(0.516px) scaleX(0.9543);-webkit-text-stroke:0.3px currentColor;">$ 15,000.00</div>
<div class="t" style="left:791px;top:664px;font-size:15.4px;color:#374151;transform:translateX(0.447px) scaleX(0.9687);-webkit-text-stroke:0.3px currentColor;">$ 0.00</div>
<div class="t" style="left:933px;top:664px;font-size:15.4px;color:#374151;transform:translateX(0.861px) scaleX(0.9629);-webkit-text-stroke:0.3px currentColor;">$ 0.00</div>
<div class="t" style="left:1062px;top:664px;font-size:15.4px;color:#374151;transform:translateX(0.569px) scaleX(0.9052);-webkit-text-stroke:0.3px currentColor;">0%</div>
<svg style="position:absolute;left:1094px;top:658.65px;overflow:visible" width="30" height="26" viewBox="0 0 30 26"><circle cx="12.1" cy="12.7" r="5.45" fill="none" stroke="#01696F" stroke-width="1.8"/><path d="M9.1 12.65 H12.6" stroke="#01696F" stroke-width="2.1"/><path d="M12.1 10.1 L15.2 12.65 L12.1 15.7 Z" fill="#01696F"/></svg>
<div class="t" style="left:1115px;top:665px;font-size:15.2px;color:#01696F;transform:translateX(0.404px) scaleX(0.9996);-webkit-text-stroke:0.6px currentColor;">Entries...</div>
<svg style="position:absolute;left:1192px;top:663.4499999999999px;overflow:visible" width="12" height="14" viewBox="0 0 12 14"><path d="M0 2.75 H11.7" stroke="#1b1f2a" stroke-width="1.3"/><path d="M3.3 2.8 L3.9 1.2 C4.1 0.8 4.4 0.6 4.8 0.6 H6.9 C7.3 0.6 7.6 0.8 7.8 1.2 L8.4 2.8" fill="none" stroke="#1b1f2a" stroke-width="1.2"/><path d="M1.6 3 V11.4 C1.6 12.2 2.2 12.75 3 12.75 H8.8 C9.6 12.75 10.2 12.2 10.2 11.4 V3" fill="none" stroke="#1b1f2a" stroke-width="1.3"/><path d="M3.5 4.8 V10 M5.4 4.8 V10 M7.6 4.8 V10" stroke="#1b1f2a" stroke-width="1"/></svg>
<div style="position:absolute;left:13.8px;top:686.9px;width:163.2px;height:1.8px;background:#E6E8EB;"></div>
<div style="position:absolute;left:179px;top:686.9px;width:183px;height:1.8px;background:#E6E8EB;"></div>
<div style="position:absolute;left:364px;top:686.9px;width:105px;height:1.8px;background:#E6E8EB;"></div>
<div style="position:absolute;left:471px;top:686.9px;width:106px;height:1.8px;background:#E6E8EB;"></div>
<div style="position:absolute;left:579px;top:686.9px;width:131px;height:1.8px;background:#E6E8EB;"></div>
<div style="position:absolute;left:712px;top:686.9px;width:474px;height:1.8px;background:#E6E8EB;"></div>
<div style="position:absolute;left:1188px;top:686.9px;width:35px;height:1.8px;background:#E6E8EB;"></div>
<div class="t" style="left:181px;top:697px;font-size:15.4px;color:#374151;transform:translateX(0.836px) scaleX(0.9807);-webkit-text-stroke:0.3px currentColor;">Deco Addict - Deco Addict</div>
<div class="t" style="left:367px;top:697px;font-size:15.4px;color:#374151;transform:translateX(0.395px) scaleX(1.0431);-webkit-text-stroke:0.3px currentColor;">01/06/2023</div>
<div class="t" style="left:474px;top:697px;font-size:15.4px;color:#374151;transform:translateX(0.401px) scaleX(1.0470);-webkit-text-stroke:0.3px currentColor;">30/06/2023</div>
<div class="t" style="left:628px;top:697px;font-size:15.4px;color:#374151;transform:translateX(0.516px) scaleX(0.9543);-webkit-text-stroke:0.3px currentColor;">$ 15,000.00</div>
<div class="t" style="left:791px;top:697px;font-size:15.4px;color:#374151;transform:translateX(0.447px) scaleX(0.9687);-webkit-text-stroke:0.3px currentColor;">$ 0.00</div>
<div class="t" style="left:933px;top:697px;font-size:15.4px;color:#374151;transform:translateX(0.861px) scaleX(0.9629);-webkit-text-stroke:0.3px currentColor;">$ 0.00</div>
<div class="t" style="left:1062px;top:697px;font-size:15.4px;color:#374151;transform:translateX(0.569px) scaleX(0.9052);-webkit-text-stroke:0.3px currentColor;">0%</div>
<svg style="position:absolute;left:1094px;top:691.5899999999999px;overflow:visible" width="30" height="26" viewBox="0 0 30 26"><circle cx="12.1" cy="12.7" r="5.45" fill="none" stroke="#01696F" stroke-width="1.8"/><path d="M9.1 12.65 H12.6" stroke="#01696F" stroke-width="2.1"/><path d="M12.1 10.1 L15.2 12.65 L12.1 15.7 Z" fill="#01696F"/></svg>
<div class="t" style="left:1115px;top:698px;font-size:15.2px;color:#01696F;transform:translateX(0.404px) scaleX(0.9996);-webkit-text-stroke:0.6px currentColor;">Entries...</div>
<svg style="position:absolute;left:1192px;top:696.3899999999999px;overflow:visible" width="12" height="14" viewBox="0 0 12 14"><path d="M0 2.75 H11.7" stroke="#1b1f2a" stroke-width="1.3"/><path d="M3.3 2.8 L3.9 1.2 C4.1 0.8 4.4 0.6 4.8 0.6 H6.9 C7.3 0.6 7.6 0.8 7.8 1.2 L8.4 2.8" fill="none" stroke="#1b1f2a" stroke-width="1.2"/><path d="M1.6 3 V11.4 C1.6 12.2 2.2 12.75 3 12.75 H8.8 C9.6 12.75 10.2 12.2 10.2 11.4 V3" fill="none" stroke="#1b1f2a" stroke-width="1.3"/><path d="M3.5 4.8 V10 M5.4 4.8 V10 M7.6 4.8 V10" stroke="#1b1f2a" stroke-width="1"/></svg>
<div style="position:absolute;left:13.8px;top:719.84px;width:163.2px;height:1.8px;background:#E6E8EB;"></div>
<div style="position:absolute;left:179px;top:719.84px;width:183px;height:1.8px;background:#E6E8EB;"></div>
<div style="position:absolute;left:364px;top:719.84px;width:105px;height:1.8px;background:#E6E8EB;"></div>
<div style="position:absolute;left:471px;top:719.84px;width:106px;height:1.8px;background:#E6E8EB;"></div>
<div style="position:absolute;left:579px;top:719.84px;width:131px;height:1.8px;background:#E6E8EB;"></div>
<div style="position:absolute;left:712px;top:719.84px;width:474px;height:1.8px;background:#E6E8EB;"></div>
<div style="position:absolute;left:1188px;top:719.84px;width:35px;height:1.8px;background:#E6E8EB;"></div>
<div class="t" style="left:181px;top:730px;font-size:15.4px;color:#374151;transform:translateX(0.836px) scaleX(0.9807);-webkit-text-stroke:0.3px currentColor;">Deco Addict - Deco Addict</div>
<div class="t" style="left:367px;top:730px;font-size:15.4px;color:#374151;transform:translateX(0.395px) scaleX(1.0431);-webkit-text-stroke:0.3px currentColor;">01/07/2023</div>
<div class="t" style="left:474px;top:730px;font-size:15.4px;color:#374151;transform:translateX(0.401px) scaleX(1.0470);-webkit-text-stroke:0.3px currentColor;">31/07/2023</div>
<div class="t" style="left:628px;top:730px;font-size:15.4px;color:#374151;transform:translateX(0.516px) scaleX(0.9543);-webkit-text-stroke:0.3px currentColor;">$ 13,000.00</div>
<div class="t" style="left:791px;top:730px;font-size:15.4px;color:#374151;transform:translateX(0.447px) scaleX(0.9687);-webkit-text-stroke:0.3px currentColor;">$ 0.00</div>
<div class="t" style="left:933px;top:730px;font-size:15.4px;color:#374151;transform:translateX(0.861px) scaleX(0.9629);-webkit-text-stroke:0.3px currentColor;">$ 0.00</div>
<div class="t" style="left:1062px;top:730px;font-size:15.4px;color:#374151;transform:translateX(0.569px) scaleX(0.9052);-webkit-text-stroke:0.3px currentColor;">0%</div>
<svg style="position:absolute;left:1094px;top:724.53px;overflow:visible" width="30" height="26" viewBox="0 0 30 26"><circle cx="12.1" cy="12.7" r="5.45" fill="none" stroke="#01696F" stroke-width="1.8"/><path d="M9.1 12.65 H12.6" stroke="#01696F" stroke-width="2.1"/><path d="M12.1 10.1 L15.2 12.65 L12.1 15.7 Z" fill="#01696F"/></svg>
<div class="t" style="left:1115px;top:731px;font-size:15.2px;color:#01696F;transform:translateX(0.404px) scaleX(0.9996);-webkit-text-stroke:0.6px currentColor;">Entries...</div>
<svg style="position:absolute;left:1192px;top:729.3299999999999px;overflow:visible" width="12" height="14" viewBox="0 0 12 14"><path d="M0 2.75 H11.7" stroke="#1b1f2a" stroke-width="1.3"/><path d="M3.3 2.8 L3.9 1.2 C4.1 0.8 4.4 0.6 4.8 0.6 H6.9 C7.3 0.6 7.6 0.8 7.8 1.2 L8.4 2.8" fill="none" stroke="#1b1f2a" stroke-width="1.2"/><path d="M1.6 3 V11.4 C1.6 12.2 2.2 12.75 3 12.75 H8.8 C9.6 12.75 10.2 12.2 10.2 11.4 V3" fill="none" stroke="#1b1f2a" stroke-width="1.3"/><path d="M3.5 4.8 V10 M5.4 4.8 V10 M7.6 4.8 V10" stroke="#1b1f2a" stroke-width="1"/></svg>
<div style="position:absolute;left:13.8px;top:752.78px;width:163.2px;height:1.8px;background:#E6E8EB;"></div>
<div style="position:absolute;left:179px;top:752.78px;width:183px;height:1.8px;background:#E6E8EB;"></div>
<div style="position:absolute;left:364px;top:752.78px;width:105px;height:1.8px;background:#E6E8EB;"></div>
<div style="position:absolute;left:471px;top:752.78px;width:106px;height:1.8px;background:#E6E8EB;"></div>
<div style="position:absolute;left:579px;top:752.78px;width:131px;height:1.8px;background:#E6E8EB;"></div>
<div style="position:absolute;left:712px;top:752.78px;width:474px;height:1.8px;background:#E6E8EB;"></div>
<div style="position:absolute;left:1188px;top:752.78px;width:35px;height:1.8px;background:#E6E8EB;"></div>
<div class="t" style="left:181px;top:763px;font-size:15.4px;color:#374151;transform:translateX(0.836px) scaleX(0.9807);-webkit-text-stroke:0.3px currentColor;">Deco Addict - Deco Addict</div>
<div class="t" style="left:367px;top:763px;font-size:15.4px;color:#374151;transform:translateX(0.395px) scaleX(1.0431);-webkit-text-stroke:0.3px currentColor;">01/08/2023</div>
<div class="t" style="left:474px;top:763px;font-size:15.4px;color:#374151;transform:translateX(0.401px) scaleX(1.0470);-webkit-text-stroke:0.3px currentColor;">31/08/2023</div>
<div class="t" style="left:636px;top:763px;font-size:15.4px;color:#374151;transform:translateX(0.593px) scaleX(0.9545);-webkit-text-stroke:0.3px currentColor;">$ 9,000.00</div>
<div class="t" style="left:791px;top:763px;font-size:15.4px;color:#374151;transform:translateX(0.447px) scaleX(0.9687);-webkit-text-stroke:0.3px currentColor;">$ 0.00</div>
<div class="t" style="left:933px;top:763px;font-size:15.4px;color:#374151;transform:translateX(0.861px) scaleX(0.9629);-webkit-text-stroke:0.3px currentColor;">$ 0.00</div>
<div class="t" style="left:1062px;top:763px;font-size:15.4px;color:#374151;transform:translateX(0.569px) scaleX(0.9052);-webkit-text-stroke:0.3px currentColor;">0%</div>
<svg style="position:absolute;left:1094px;top:757.47px;overflow:visible" width="30" height="26" viewBox="0 0 30 26"><circle cx="12.1" cy="12.7" r="5.45" fill="none" stroke="#01696F" stroke-width="1.8"/><path d="M9.1 12.65 H12.6" stroke="#01696F" stroke-width="2.1"/><path d="M12.1 10.1 L15.2 12.65 L12.1 15.7 Z" fill="#01696F"/></svg>
<div class="t" style="left:1115px;top:764px;font-size:15.2px;color:#01696F;transform:translateX(0.404px) scaleX(0.9996);-webkit-text-stroke:0.6px currentColor;">Entries...</div>
<svg style="position:absolute;left:1192px;top:762.27px;overflow:visible" width="12" height="14" viewBox="0 0 12 14"><path d="M0 2.75 H11.7" stroke="#1b1f2a" stroke-width="1.3"/><path d="M3.3 2.8 L3.9 1.2 C4.1 0.8 4.4 0.6 4.8 0.6 H6.9 C7.3 0.6 7.6 0.8 7.8 1.2 L8.4 2.8" fill="none" stroke="#1b1f2a" stroke-width="1.2"/><path d="M1.6 3 V11.4 C1.6 12.2 2.2 12.75 3 12.75 H8.8 C9.6 12.75 10.2 12.2 10.2 11.4 V3" fill="none" stroke="#1b1f2a" stroke-width="1.3"/><path d="M3.5 4.8 V10 M5.4 4.8 V10 M7.6 4.8 V10" stroke="#1b1f2a" stroke-width="1"/></svg>
<div style="position:absolute;left:13.8px;top:785.72px;width:163.2px;height:1.8px;background:#E6E8EB;"></div>
<div style="position:absolute;left:179px;top:785.72px;width:183px;height:1.8px;background:#E6E8EB;"></div>
<div style="position:absolute;left:364px;top:785.72px;width:105px;height:1.8px;background:#E6E8EB;"></div>
<div style="position:absolute;left:471px;top:785.72px;width:106px;height:1.8px;background:#E6E8EB;"></div>
<div style="position:absolute;left:579px;top:785.72px;width:131px;height:1.8px;background:#E6E8EB;"></div>
<div style="position:absolute;left:712px;top:785.72px;width:474px;height:1.8px;background:#E6E8EB;"></div>
<div style="position:absolute;left:1188px;top:785.72px;width:35px;height:1.8px;background:#E6E8EB;"></div>
<div class="t" style="left:181px;top:796px;font-size:15.4px;color:#374151;transform:translateX(0.836px) scaleX(0.9807);-webkit-text-stroke:0.3px currentColor;">Deco Addict - Deco Addict</div>
<div class="t" style="left:367px;top:796px;font-size:15.4px;color:#374151;transform:translateX(0.395px) scaleX(1.0431);-webkit-text-stroke:0.3px currentColor;">01/09/2023</div>
<div class="t" style="left:474px;top:796px;font-size:15.4px;color:#374151;transform:translateX(0.401px) scaleX(1.0470);-webkit-text-stroke:0.3px currentColor;">30/09/2023</div>
<div class="t" style="left:636px;top:796px;font-size:15.4px;color:#374151;transform:translateX(0.593px) scaleX(0.9545);-webkit-text-stroke:0.3px currentColor;">$ 8,000.00</div>
<div class="t" style="left:791px;top:796px;font-size:15.4px;color:#374151;transform:translateX(0.447px) scaleX(0.9687);-webkit-text-stroke:0.3px currentColor;">$ 0.00</div>
<div class="t" style="left:933px;top:796px;font-size:15.4px;color:#374151;transform:translateX(0.861px) scaleX(0.9629);-webkit-text-stroke:0.3px currentColor;">$ 0.00</div>
<div class="t" style="left:1062px;top:796px;font-size:15.4px;color:#374151;transform:translateX(0.569px) scaleX(0.9052);-webkit-text-stroke:0.3px currentColor;">0%</div>
<svg style="position:absolute;left:1094px;top:790.41px;overflow:visible" width="30" height="26" viewBox="0 0 30 26"><circle cx="12.1" cy="12.7" r="5.45" fill="none" stroke="#01696F" stroke-width="1.8"/><path d="M9.1 12.65 H12.6" stroke="#01696F" stroke-width="2.1"/><path d="M12.1 10.1 L15.2 12.65 L12.1 15.7 Z" fill="#01696F"/></svg>
<div class="t" style="left:1115px;top:797px;font-size:15.2px;color:#01696F;transform:translateX(0.404px) scaleX(0.9996);-webkit-text-stroke:0.6px currentColor;">Entries...</div>
<svg style="position:absolute;left:1192px;top:795.2099999999999px;overflow:visible" width="12" height="14" viewBox="0 0 12 14"><path d="M0 2.75 H11.7" stroke="#1b1f2a" stroke-width="1.3"/><path d="M3.3 2.8 L3.9 1.2 C4.1 0.8 4.4 0.6 4.8 0.6 H6.9 C7.3 0.6 7.6 0.8 7.8 1.2 L8.4 2.8" fill="none" stroke="#1b1f2a" stroke-width="1.2"/><path d="M1.6 3 V11.4 C1.6 12.2 2.2 12.75 3 12.75 H8.8 C9.6 12.75 10.2 12.2 10.2 11.4 V3" fill="none" stroke="#1b1f2a" stroke-width="1.3"/><path d="M3.5 4.8 V10 M5.4 4.8 V10 M7.6 4.8 V10" stroke="#1b1f2a" stroke-width="1"/></svg>
<div style="position:absolute;left:13.8px;top:818.66px;width:163.2px;height:1.8px;background:#E6E8EB;"></div>
<div style="position:absolute;left:179px;top:818.66px;width:183px;height:1.8px;background:#E6E8EB;"></div>
<div style="position:absolute;left:364px;top:818.66px;width:105px;height:1.8px;background:#E6E8EB;"></div>
<div style="position:absolute;left:471px;top:818.66px;width:106px;height:1.8px;background:#E6E8EB;"></div>
<div style="position:absolute;left:579px;top:818.66px;width:131px;height:1.8px;background:#E6E8EB;"></div>
<div style="position:absolute;left:712px;top:818.66px;width:474px;height:1.8px;background:#E6E8EB;"></div>
<div style="position:absolute;left:1188px;top:818.66px;width:35px;height:1.8px;background:#E6E8EB;"></div>
<div class="t" style="left:181px;top:829px;font-size:15.4px;color:#374151;transform:translateX(0.836px) scaleX(0.9807);-webkit-text-stroke:0.3px currentColor;">Deco Addict - Deco Addict</div>
<div class="t" style="left:367px;top:829px;font-size:15.4px;color:#374151;transform:translateX(0.395px) scaleX(1.0431);-webkit-text-stroke:0.3px currentColor;">01/10/2023</div>
<div class="t" style="left:474px;top:829px;font-size:15.4px;color:#374151;transform:translateX(0.401px) scaleX(1.0470);-webkit-text-stroke:0.3px currentColor;">31/10/2023</div>
<div class="t" style="left:628px;top:829px;font-size:15.4px;color:#374151;transform:translateX(0.516px) scaleX(0.9543);-webkit-text-stroke:0.3px currentColor;">$ 15,000.00</div>
<div class="t" style="left:791px;top:829px;font-size:15.4px;color:#374151;transform:translateX(0.447px) scaleX(0.9687);-webkit-text-stroke:0.3px currentColor;">$ 0.00</div>
<div class="t" style="left:933px;top:829px;font-size:15.4px;color:#374151;transform:translateX(0.861px) scaleX(0.9629);-webkit-text-stroke:0.3px currentColor;">$ 0.00</div>
<div class="t" style="left:1062px;top:829px;font-size:15.4px;color:#374151;transform:translateX(0.569px) scaleX(0.9052);-webkit-text-stroke:0.3px currentColor;">0%</div>
<svg style="position:absolute;left:1094px;top:823.3499999999999px;overflow:visible" width="30" height="26" viewBox="0 0 30 26"><circle cx="12.1" cy="12.7" r="5.45" fill="none" stroke="#01696F" stroke-width="1.8"/><path d="M9.1 12.65 H12.6" stroke="#01696F" stroke-width="2.1"/><path d="M12.1 10.1 L15.2 12.65 L12.1 15.7 Z" fill="#01696F"/></svg>
<div class="t" style="left:1115px;top:830px;font-size:15.2px;color:#01696F;transform:translateX(0.404px) scaleX(0.9996);-webkit-text-stroke:0.6px currentColor;">Entries...</div>
<svg style="position:absolute;left:1192px;top:828.1499999999999px;overflow:visible" width="12" height="14" viewBox="0 0 12 14"><path d="M0 2.75 H11.7" stroke="#1b1f2a" stroke-width="1.3"/><path d="M3.3 2.8 L3.9 1.2 C4.1 0.8 4.4 0.6 4.8 0.6 H6.9 C7.3 0.6 7.6 0.8 7.8 1.2 L8.4 2.8" fill="none" stroke="#1b1f2a" stroke-width="1.2"/><path d="M1.6 3 V11.4 C1.6 12.2 2.2 12.75 3 12.75 H8.8 C9.6 12.75 10.2 12.2 10.2 11.4 V3" fill="none" stroke="#1b1f2a" stroke-width="1.3"/><path d="M3.5 4.8 V10 M5.4 4.8 V10 M7.6 4.8 V10" stroke="#1b1f2a" stroke-width="1"/></svg>
<div style="position:absolute;left:13.8px;top:851.6px;width:163.2px;height:1.8px;background:#E6E8EB;"></div>
<div style="position:absolute;left:179px;top:851.6px;width:183px;height:1.8px;background:#E6E8EB;"></div>
<div style="position:absolute;left:364px;top:851.6px;width:105px;height:1.8px;background:#E6E8EB;"></div>
<div style="position:absolute;left:471px;top:851.6px;width:106px;height:1.8px;background:#E6E8EB;"></div>
<div style="position:absolute;left:579px;top:851.6px;width:131px;height:1.8px;background:#E6E8EB;"></div>
<div style="position:absolute;left:712px;top:851.6px;width:474px;height:1.8px;background:#E6E8EB;"></div>
<div style="position:absolute;left:1188px;top:851.6px;width:35px;height:1.8px;background:#E6E8EB;"></div>
<div class="t" style="left:181px;top:861px;font-size:15.4px;color:#374151;transform:translateX(0.836px) scaleX(0.9807);-webkit-text-stroke:0.3px currentColor;">Deco Addict - Deco Addict</div>
<div class="t" style="left:367px;top:861px;font-size:15.4px;color:#374151;transform:translateX(0.348px) scaleX(1.0597);-webkit-text-stroke:0.3px currentColor;">01/11/2023</div>
<div class="t" style="left:474px;top:861px;font-size:15.4px;color:#374151;transform:translateX(0.388px) scaleX(1.0635);-webkit-text-stroke:0.3px currentColor;">30/11/2023</div>
<div class="t" style="left:628px;top:861px;font-size:15.4px;color:#374151;transform:translateX(0.516px) scaleX(0.9543);-webkit-text-stroke:0.3px currentColor;">$ 15,000.00</div>
<div class="t" style="left:791px;top:861px;font-size:15.4px;color:#374151;transform:translateX(0.447px) scaleX(0.9687);-webkit-text-stroke:0.3px currentColor;">$ 0.00</div>
<div class="t" style="left:933px;top:861px;font-size:15.4px;color:#374151;transform:translateX(0.861px) scaleX(0.9629);-webkit-text-stroke:0.3px currentColor;">$ 0.00</div>
<div class="t" style="left:1062px;top:861px;font-size:15.4px;color:#374151;transform:translateX(0.569px) scaleX(0.9052);-webkit-text-stroke:0.3px currentColor;">0%</div>
<svg style="position:absolute;left:1094px;top:856.29px;overflow:visible" width="30" height="26" viewBox="0 0 30 26"><circle cx="12.1" cy="12.7" r="5.45" fill="none" stroke="#01696F" stroke-width="1.8"/><path d="M9.1 12.65 H12.6" stroke="#01696F" stroke-width="2.1"/><path d="M12.1 10.1 L15.2 12.65 L12.1 15.7 Z" fill="#01696F"/></svg>
<div class="t" style="left:1115px;top:862px;font-size:15.2px;color:#01696F;transform:translateX(0.404px) scaleX(0.9996);-webkit-text-stroke:0.6px currentColor;">Entries...</div>
<svg style="position:absolute;left:1192px;top:861.0899999999999px;overflow:visible" width="12" height="14" viewBox="0 0 12 14"><path d="M0 2.75 H11.7" stroke="#1b1f2a" stroke-width="1.3"/><path d="M3.3 2.8 L3.9 1.2 C4.1 0.8 4.4 0.6 4.8 0.6 H6.9 C7.3 0.6 7.6 0.8 7.8 1.2 L8.4 2.8" fill="none" stroke="#1b1f2a" stroke-width="1.2"/><path d="M1.6 3 V11.4 C1.6 12.2 2.2 12.75 3 12.75 H8.8 C9.6 12.75 10.2 12.2 10.2 11.4 V3" fill="none" stroke="#1b1f2a" stroke-width="1.3"/><path d="M3.5 4.8 V10 M5.4 4.8 V10 M7.6 4.8 V10" stroke="#1b1f2a" stroke-width="1"/></svg>
<div style="position:absolute;left:13.8px;top:884.54px;width:163.2px;height:1.8px;background:#E6E8EB;"></div>
<div style="position:absolute;left:179px;top:884.54px;width:183px;height:1.8px;background:#E6E8EB;"></div>
<div style="position:absolute;left:364px;top:884.54px;width:105px;height:1.8px;background:#E6E8EB;"></div>
<div style="position:absolute;left:471px;top:884.54px;width:106px;height:1.8px;background:#E6E8EB;"></div>
<div style="position:absolute;left:579px;top:884.54px;width:131px;height:1.8px;background:#E6E8EB;"></div>
<div style="position:absolute;left:712px;top:884.54px;width:474px;height:1.8px;background:#E6E8EB;"></div>
<div style="position:absolute;left:1188px;top:884.54px;width:35px;height:1.8px;background:#E6E8EB;"></div>
<div class="t" style="left:181px;top:894px;font-size:15.4px;color:#374151;transform:translateX(0.836px) scaleX(0.9807);-webkit-text-stroke:0.3px currentColor;">Deco Addict - Deco Addict</div>
<div class="t" style="left:367px;top:894px;font-size:15.4px;color:#374151;transform:translateX(0.395px) scaleX(1.0431);-webkit-text-stroke:0.3px currentColor;">01/12/2023</div>
<div class="t" style="left:474px;top:894px;font-size:15.4px;color:#374151;transform:translateX(0.401px) scaleX(1.0470);-webkit-text-stroke:0.3px currentColor;">31/12/2023</div>
<div class="t" style="left:628px;top:894px;font-size:15.4px;color:#374151;transform:translateX(0.516px) scaleX(0.9543);-webkit-text-stroke:0.3px currentColor;">$ 18,000.00</div>
<div class="t" style="left:791px;top:894px;font-size:15.4px;color:#374151;transform:translateX(0.447px) scaleX(0.9687);-webkit-text-stroke:0.3px currentColor;">$ 0.00</div>
<div class="t" style="left:933px;top:894px;font-size:15.4px;color:#374151;transform:translateX(0.861px) scaleX(0.9629);-webkit-text-stroke:0.3px currentColor;">$ 0.00</div>
<div class="t" style="left:1062px;top:894px;font-size:15.4px;color:#374151;transform:translateX(0.569px) scaleX(0.9052);-webkit-text-stroke:0.3px currentColor;">0%</div>
<svg style="position:absolute;left:1094px;top:889.23px;overflow:visible" width="30" height="26" viewBox="0 0 30 26"><circle cx="12.1" cy="12.7" r="5.45" fill="none" stroke="#01696F" stroke-width="1.8"/><path d="M9.1 12.65 H12.6" stroke="#01696F" stroke-width="2.1"/><path d="M12.1 10.1 L15.2 12.65 L12.1 15.7 Z" fill="#01696F"/></svg>
<div class="t" style="left:1115px;top:895px;font-size:15.2px;color:#01696F;transform:translateX(0.404px) scaleX(0.9996);-webkit-text-stroke:0.6px currentColor;">Entries...</div>
<svg style="position:absolute;left:1192px;top:894.03px;overflow:visible" width="12" height="14" viewBox="0 0 12 14"><path d="M0 2.75 H11.7" stroke="#1b1f2a" stroke-width="1.3"/><path d="M3.3 2.8 L3.9 1.2 C4.1 0.8 4.4 0.6 4.8 0.6 H6.9 C7.3 0.6 7.6 0.8 7.8 1.2 L8.4 2.8" fill="none" stroke="#1b1f2a" stroke-width="1.2"/><path d="M1.6 3 V11.4 C1.6 12.2 2.2 12.75 3 12.75 H8.8 C9.6 12.75 10.2 12.2 10.2 11.4 V3" fill="none" stroke="#1b1f2a" stroke-width="1.3"/><path d="M3.5 4.8 V10 M5.4 4.8 V10 M7.6 4.8 V10" stroke="#1b1f2a" stroke-width="1"/></svg>
<svg style="position:absolute;left:1224px;top:898px;overflow:visible" width="22" height="27" viewBox="0 0 22 27"><path d="M1.2 27 V12 H2.4 V3.5 H3.4 V10.5 H5 V12.5 H7 V14 H9.5 V15.5 H12.5 V17 H15.5 V18.8 H18.5 V23 H19.6 V27 Z" fill="#E5E7EB"/></svg>
</body></html>
